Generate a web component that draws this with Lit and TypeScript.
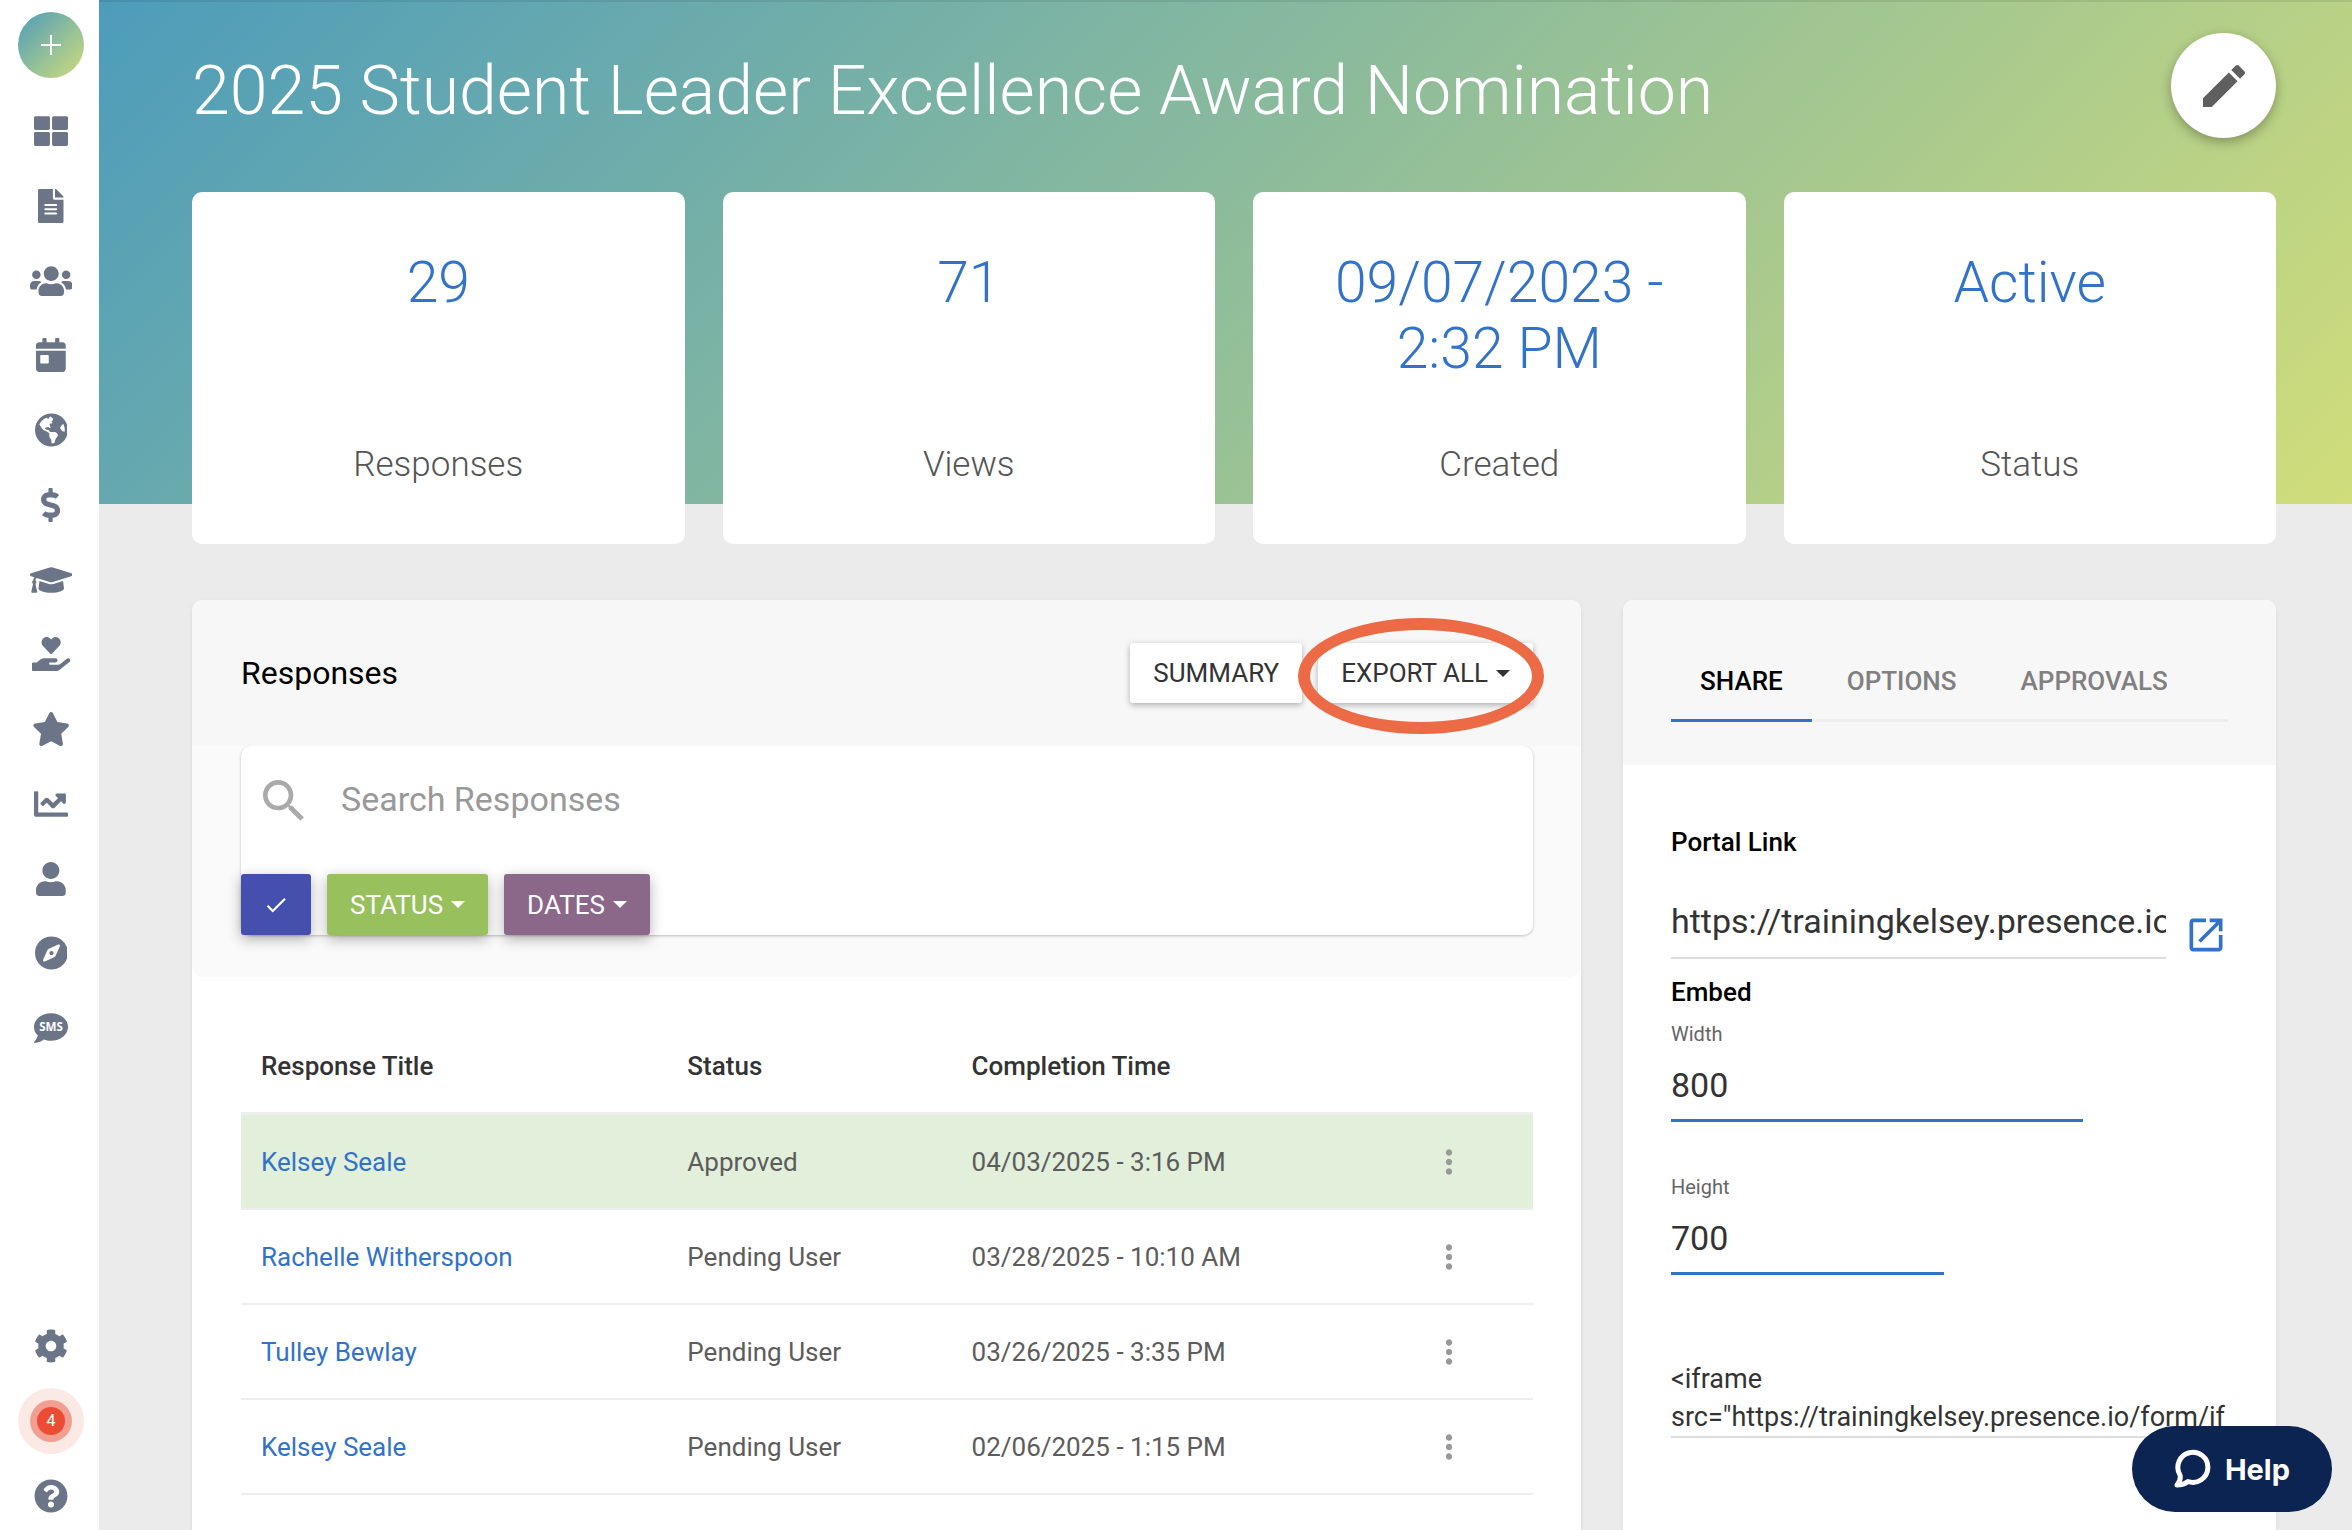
import { LitElement, html, css, svg } from "lit";
import { customElement, property, state } from "lit/decorators.js";
import { classMap } from "lit/directives/class-map.js";

interface Glyph {
  name: string;
  width: number;
  path: string;
}

const NAV: Glyph[] = [
  { name: "Dashboard", width: 512, path: "M296 32h192c13.255 0 24 10.745 24 24v160c0 13.255-10.745 24-24 24H296c-13.255 0-24-10.745-24-24V56c0-13.255 10.745-24 24-24zm-80 0H24C10.745 32 0 42.745 0 56v160c0 13.255 10.745 24 24 24h192c13.255 0 24-10.745 24-24V56c0-13.255-10.745-24-24-24zM0 296v160c0 13.255 10.745 24 24 24h192c13.255 0 24-10.745 24-24V296c0-13.255-10.745-24-24-24H24c-13.255 0-24 10.745-24 24zm296 184h192c13.255 0 24-10.745 24-24V296c0-13.255-10.745-24-24-24H296c-13.255 0-24 10.745-24 24v160c0 13.255 10.745 24 24 24z" },
  { name: "Forms", width: 384, path: "M224 136V0H24C10.7 0 0 10.7 0 24v464c0 13.3 10.7 24 24 24h336c13.3 0 24-10.7 24-24V160H248c-13.2 0-24-10.8-24-24zm64 236c0 6.6-5.4 12-12 12H108c-6.6 0-12-5.4-12-12v-8c0-6.6 5.4-12 12-12h168c6.6 0 12 5.4 12 12v8zm0-64c0 6.6-5.4 12-12 12H108c-6.6 0-12-5.4-12-12v-8c0-6.6 5.4-12 12-12h168c6.6 0 12 5.4 12 12v8zm0-72v8c0 6.6-5.4 12-12 12H108c-6.6 0-12-5.4-12-12v-8c0-6.6 5.4-12 12-12h168c6.6 0 12 5.4 12 12zm96-114.1v6.1H256V0h6.1c6.4 0 12.5 2.5 17 7l97.9 98c4.5 4.5 7 10.6 7 16.9z" },
  { name: "Organizations", width: 640, path: "M96 224c35.3 0 64-28.7 64-64s-28.7-64-64-64-64 28.7-64 64 28.7 64 64 64zm448 0c35.3 0 64-28.7 64-64s-28.7-64-64-64-64 28.7-64 64 28.7 64 64 64zm32 32h-64c-17.6 0-33.5 7.1-45.1 18.6 40.3 22.1 68.9 62 75.1 109.4h66c17.7 0 32-14.3 32-32v-32c0-35.3-28.7-64-64-64zm-256 0c61.9 0 112-50.1 112-112S381.9 32 320 32 208 82.1 208 144s50.1 112 112 112zm76.8 32h-8.3c-20.8 10-43.9 16-68.5 16s-47.6-6-68.5-16h-8.3C179.6 288 128 339.6 128 403.2V432c0 26.5 21.5 48 48 48h288c26.5 0 48-21.5 48-48v-28.8c0-63.6-51.6-115.2-115.2-115.2zm-223.7-13.4C161.5 263.1 145.6 256 128 256H64c-35.3 0-64 28.7-64 64v32c0 17.7 14.3 32 32 32h65.9c6.3-47.4 34.9-87.3 75.2-109.4z" },
  { name: "Events", width: 448, path: "M0 464c0 26.5 21.5 48 48 48h352c26.5 0 48-21.5 48-48V192H0v272zm64-192c0-8.8 7.2-16 16-16h96c8.8 0 16 7.2 16 16v96c0 8.8-7.2 16-16 16H80c-8.8 0-16-7.2-16-16v-96zM400 64h-48V16c0-8.8-7.2-16-16-16h-32c-8.8 0-16 7.2-16 16v48H160V16c0-8.8-7.2-16-16-16h-32c-8.8 0-16 7.2-16 16v48H48C21.5 64 0 85.5 0 112v48h448v-48c0-26.5-21.5-48-48-48z" },
  { name: "Portal", width: 496, path: "M248 8C111.03 8 0 119.03 0 256s111.03 248 248 248 248-111.03 248-248S384.97 8 248 8zm82.29 357.6c-3.9 3.88-7.99 7.95-11.31 11.28-2.99 3-5.1 6.7-6.17 10.71-1.51 5.66-2.73 11.38-4.77 16.87l-17.39 46.85c-13.76 3-28 4.69-42.65 4.69v-27.38c1.69-12.62-7.64-36.26-22.63-51.25-6-6-9.37-14.14-9.37-22.63v-32.01c0-11.64-6.27-22.34-16.46-27.97-14.37-7.95-34.81-19.06-48.81-26.11-11.48-5.78-22.1-13.14-31.65-21.75l-.8-.72a114.792 114.792 0 0 1-18.06-20.74c-9.38-13.77-24.66-36.42-34.59-51.14 20.47-45.5 57.36-82.04 103.2-101.89l24.01 12.01C203.48 89.74 216 82.01 216 70.11v-11.3c7.99-1.29 16.12-2.11 24.39-2.42l28.3 28.3c6.25 6.25 6.25 16.38 0 22.63L264 112l-10.34 10.34c-3.12 3.12-3.12 8.19 0 11.31l4.69 4.69c3.12 3.12 3.12 8.19 0 11.31l-8 8a8.008 8.008 0 0 1-5.66 2.34h-8.99c-2.08 0-4.08.81-5.58 2.27l-9.92 9.65a8.008 8.008 0 0 0-1.58 9.31l15.59 31.19c2.66 5.32-1.21 11.58-7.15 11.58h-5.64c-1.93 0-3.79-.7-5.24-1.96l-9.28-8.06a16.017 16.017 0 0 0-15.55-3.1l-31.17 10.39a11.95 11.95 0 0 0-8.17 11.34c0 4.53 2.56 8.66 6.61 10.69l11.08 5.54c9.41 4.71 19.79 7.16 30.31 7.16s22.59 27.29 32 32h66.75c8.49 0 16.62 3.37 22.63 9.37l13.69 13.69a30.503 30.503 0 0 1 8.93 21.57 46.536 46.536 0 0 1-13.72 32.98zM417 274.25c-5.79-1.45-10.84-5-14.15-9.97l-17.98-26.97a23.97 23.97 0 0 1 0-26.62l19.59-29.38c2.32-3.47 5.5-6.29 9.24-8.15l12.98-6.49C440.2 193.59 448 223.87 448 256c0 8.67-.74 17.16-1.82 25.54L417 274.25z" },
  { name: "Finance", width: 288, path: "M209.2 233.4l-108-31.6C88.7 198.2 80 186.5 80 173.5c0-16.3 13.2-29.5 29.5-29.5h66.3c12.2 0 24.2 3.7 34.2 10.5 6.1 4.1 14.3 3.1 19.5-2l34.8-34c7.1-6.9 6.1-18.4-1.8-24.5C238 74.8 207.4 64.1 176 64V16c0-8.8-7.2-16-16-16h-32c-8.8 0-16 7.2-16 16v48h-2.5C45.8 64-5.4 118.7.5 183.6c4.2 46.1 39.4 83.6 83.8 96.6l102.5 30c12.5 3.7 21.2 15.3 21.2 28.3 0 16.3-13.2 29.5-29.5 29.5h-66.3C100 368 88 364.3 78 357.5c-6.1-4.1-14.3-3.1-19.5 2l-34.8 34c-7.1 6.9-6.1 18.4 1.8 24.5 24.5 19.2 55.1 29.9 86.5 30v48c0 8.8 7.2 16 16 16h32c8.8 0 16-7.2 16-16v-48.2c46.6-.9 90.3-28.6 105.7-72.7 21.5-61.6-14.6-124.8-72.5-141.7z" },
  { name: "Academics", width: 640, path: "M622.34 153.2L343.4 67.5c-15.2-4.67-31.6-4.67-46.79 0L17.66 153.2c-23.54 7.23-23.54 38.36 0 45.59l48.63 14.94c-10.67 13.19-17.23 29.28-17.88 46.9C38.78 266.15 32 276.11 32 288c0 10.78 5.68 19.85 13.86 25.65L20.33 428.53C18.11 438.52 25.71 448 35.94 448h56.11c10.24 0 17.84-9.48 15.62-19.47L82.14 313.65C90.32 307.85 96 298.78 96 288c0-11.57-6.47-21.25-15.66-26.87.76-15.02 8.44-28.3 20.69-36.72L296.6 284.5c9.06 2.78 26.44 6.25 46.79 0l278.95-85.7c23.55-7.24 23.55-38.36 0-45.6zM352.79 315.09c-28.53 8.76-52.84 3.92-65.59 0l-145.02-44.55L128 384c0 35.35 85.96 64 192 64s192-28.65 192-64l-14.18-113.47-145.03 44.56z" },
  { name: "Service", width: 576, path: "M275.3 250.5c7 7.4 18.4 7.4 25.5 0l108.9-114.2c31.6-33.2 29.8-88.2-5.6-118.8-30.8-26.7-76.7-21.9-104.9 7.7L288 36.9l-11.1-11.6C248.7-4.4 202.8-9.2 172 17.5c-35.3 30.6-37.2 85.6-5.6 118.8l108.9 114.2zm290 77.6c-11.8-10.7-30.2-10-42.6 0L430.3 402c-11.3 9.1-25.4 14-40 14H272c-8.8 0-16-7.2-16-16s7.2-16 16-16h78.3c15.9 0 30.7-10.9 33.3-26.6 3.3-20-12.1-37.4-31.6-37.4H192c-27 0-53.1 9.3-74.1 26.3L71.4 384H16c-8.8 0-16 7.2-16 16v96c0 8.8 7.2 16 16 16h356.8c14.5 0 28.6-4.9 40-14L564 377c15.2-12.1 16.4-35.3 1.3-48.9z" },
  { name: "Favorites", width: 576, path: "M259.3 17.8L194 150.2 47.9 171.5c-26.2 3.8-36.7 36.1-17.7 54.6l105.7 103-25 145.5c-4.5 26.3 23.2 46 46.4 33.7L288 439.6l130.7 68.7c23.2 12.2 50.9-7.4 46.4-33.7l-25-145.5 105.7-103c19-18.5 8.5-50.8-17.7-54.6L382 150.2 316.7 17.8c-11.7-23.6-45.6-23.9-57.4 0z" },
  { name: "Analytics", width: 512, path: "M496 384H64V80c0-8.84-7.16-16-16-16H16C7.16 64 0 71.16 0 80v336c0 17.67 14.33 32 32 32h464c8.84 0 16-7.16 16-16v-32c0-8.84-7.16-16-16-16zM464 96H345.94c-21.38 0-32.09 25.85-16.97 40.97l32.4 32.4L288 242.75l-73.37-73.37c-12.5-12.5-32.76-12.5-45.25 0l-68.69 68.69c-6.25 6.25-6.25 16.38 0 22.63l22.62 22.62c6.25 6.25 16.38 6.25 22.63 0L192 237.25l73.37 73.37c12.5 12.5 32.76 12.5 45.25 0l96-96 32.4 32.4c15.12 15.12 40.97 4.41 40.97-16.97V112c.01-8.84-7.15-16-15.99-16z" },
  { name: "People", width: 448, path: "M224 256c70.7 0 128-57.3 128-128S294.7 0 224 0 96 57.3 96 128s57.3 128 128 128zm89.6 32h-16.7c-22.2 10.2-46.9 16-72.9 16s-50.6-5.8-72.9-16h-16.7C60.2 288 0 348.2 0 422.4V464c0 26.5 21.5 48 48 48h352c26.5 0 48-21.5 48-48v-41.6c0-74.2-60.2-134.4-134.4-134.4z" },
  { name: "Explore", width: 496, path: "M225.38 233.37c-12.5 12.5-12.5 32.76 0 45.25 12.49 12.5 32.76 12.5 45.25 0 12.5-12.5 12.5-32.76 0-45.25-12.5-12.49-32.76-12.49-45.25 0zM248 8C111.03 8 0 119.03 0 256s111.03 248 248 248 248-111.03 248-248S384.97 8 248 8zm126.14 148.05L308.17 300.4a31.938 31.938 0 0 1-15.77 15.77l-144.34 65.97c-16.65 7.61-33.81-9.55-26.2-26.2l65.98-144.35a31.938 31.938 0 0 1 15.77-15.77l144.34-65.97c16.65-7.6 33.8 9.55 26.19 26.2z" },
];

const SMS_BUBBLE =
  "M256 32C114.6 32 0 125.1 0 240c0 49.6 21.4 95 57 130.7C44.5 421.1 2.7 466 2.2 466.5c-2.2 2.3-2.8 5.7-1.5 8.7S4.8 480 8 480c66.3 0 116-31.8 140.6-51.4 32.7 12.3 69 19.4 107.4 19.4 141.4 0 256-93.1 256-208S397.4 32 256 32z";

const SETTINGS: Glyph = {
  name: "Settings",
  width: 512,
  path: "M487.4 315.7l-42.6-24.6c4.3-23.2 4.3-47 0-70.2l42.6-24.6c4.9-2.8 7.1-8.6 5.5-14-11.1-35.6-30-67.8-54.7-94.6-3.8-4.1-10-5.1-14.8-2.3L380.8 110c-17.9-15.4-38.5-27.3-60.8-35.1V25.8c0-5.6-3.9-10.5-9.4-11.7-36.7-8.2-74.3-7.8-109.2 0-5.5 1.2-9.4 6.1-9.4 11.7V75c-22.2 7.9-42.8 19.8-60.8 35.1L88.7 85.5c-4.9-2.8-11-1.9-14.8 2.3-24.7 26.7-43.6 58.9-54.7 94.6-1.7 5.4.6 11.2 5.5 14L67.3 221c-4.3 23.2-4.3 47 0 70.2l-42.6 24.6c-4.9 2.8-7.1 8.6-5.5 14 11.1 35.6 30 67.8 54.7 94.6 3.8 4.1 10 5.1 14.8 2.3l42.6-24.6c17.9 15.4 38.5 27.3 60.8 35.1v49.2c0 5.6 3.9 10.5 9.4 11.7 36.7 8.2 74.3 7.8 109.2 0 5.5-1.2 9.4-6.1 9.4-11.7v-49.2c22.2-7.9 42.8-19.8 60.8-35.1l42.6 24.6c4.9 2.8 11 1.9 14.8-2.3 24.7-26.7 43.6-58.9 54.7-94.6 1.5-5.5-.7-11.3-5.6-14.1zM256 336c-44.1 0-80-35.9-80-80s35.9-80 80-80 80 35.9 80 80-35.9 80-80 80z",
};

const SUPPORT: Glyph = {
  name: "Support",
  width: 512,
  path: "M504 256c0 136.997-111.043 248-248 248S8 392.997 8 256C8 119.083 119.043 8 256 8s248 111.083 248 248zM262.655 90c-54.497 0-89.255 22.957-116.549 63.758-3.536 5.286-2.353 12.415 2.715 16.258l34.699 26.31c5.205 3.947 12.621 3.008 16.665-2.122 17.864-22.658 30.113-35.797 57.303-35.797 20.429 0 45.698 13.148 45.698 32.958 0 14.976-12.363 22.667-32.534 33.976C247.128 238.528 216 254.941 216 296v4c0 6.627 5.373 12 12 12h56c6.627 0 12-5.373 12-12v-1.333c0-28.462 83.186-29.647 83.186-106.667 0-58.002-60.165-102-116.531-102zM256 338c-25.365 0-46 20.635-46 46 0 25.364 20.635 46 46 46s46-20.636 46-46c0-25.364-20.635-46-46-46z",
};

const EDIT = "M3 17.25V21h3.75L17.81 9.94l-3.75-3.75L3 17.25zM20.71 7.04c.39-.39.39-1.02 0-1.41l-2.34-2.34c-.39-.39-1.02-.39-1.41 0l-1.83 1.83 3.75 3.75 1.83-1.83z";
const SEARCH = "M15.5 14h-.79l-.28-.27C15.41 12.59 16 11.11 16 9.5 16 5.91 13.09 3 9.5 3S3 5.91 3 9.5 5.91 16 9.5 16c1.61 0 3.09-.59 4.23-1.57l.27.28v.79l5 4.99L20.49 19l-4.99-5zm-6 0C7.01 14 5 11.99 5 9.5S7.01 5 9.5 5 14 7.01 14 9.5 11.99 14 9.5 14z";
const CHECK = "M9 16.17L4.83 12l-1.42 1.41L9 19 21 7l-1.41-1.41z";
const OPEN = "M19 19H5V5h7V3H5c-1.11 0-2 .9-2 2v14c0 1.1.89 2 2 2h14c1.1 0 2-.9 2-2v-7h-2v7zM14 3v2h3.59l-9.83 9.83 1.41 1.41L19 6.41V10h2V3h-7z";
const MORE = "M12 8c1.1 0 2-.9 2-2s-.9-2-2-2-2 .9-2 2 .9 2 2 2zm0 2c-1.1 0-2 .9-2 2s.9 2 2 2 2-.9 2-2-.9-2-2-2zm0 6c-1.1 0-2 .9-2 2s.9 2 2 2 2-.9 2-2-.9-2-2-2z";

const material = (path: string, cls: string) =>
  html`<svg class=${cls} viewBox="0 0 24 24" aria-hidden="true"><path d=${path}></path></svg>`;

const reset = css`
  *,
  *::before,
  *::after {
    box-sizing: border-box;
  }
  button,
  input,
  textarea {
    margin: 0;
    padding: 0;
    border: 0;
    border-radius: 0;
    background: none;
    color: inherit;
    font: inherit;
    outline: none;
  }
  button {
    cursor: pointer;
  }
  svg {
    display: block;
    fill: currentColor;
  }
`;

@customElement("side-nav")
export class SideNav extends LitElement {
  static styles = [
    reset,
    css`
      :host {
        box-sizing: border-box;
        position: sticky;
        top: 0;
        display: flex;
        flex-direction: column;
        align-items: center;
        flex: none;
        width: 99px;
        height: 100vh;
        padding: 12px 0 10px 3px;
        background: #fff;
        color: #6c7588;
      }
      .add {
        display: grid;
        place-items: center;
        width: 66px;
        height: 66px;
        border-radius: 50%;
        background: linear-gradient(135deg, #4d9cbb, #d0dd7a);
      }
      .plus {
        width: 22px;
        height: 22px;
        fill: none;
        stroke: #fff;
        stroke-width: 2;
      }
      .list {
        display: flex;
        flex-direction: column;
        justify-content: space-between;
        height: 945px;
        margin: 29px 0 auto;
        padding: 0;
        list-style: none;
      }
      .foot {
        display: flex;
        flex-direction: column;
        gap: 27px;
        margin: 0;
        padding: 0;
        list-style: none;
      }
      .item {
        display: flex;
        align-items: center;
        justify-content: center;
        width: 66px;
        height: 48px;
        color: inherit;
        text-decoration: none;
      }
      .glyph {
        height: 34px;
        width: auto;
      }
      .sms {
        font: 700 175px "Open Sans", sans-serif;
        fill: #fff;
        text-anchor: middle;
      }
      .halo {
        display: grid;
        place-items: center;
        flex: none;
        width: 66px;
        height: 66px;
        border-radius: 50%;
        background: #fbe9e6;
      }
      .ring {
        display: grid;
        place-items: center;
        width: 42px;
        height: 42px;
        border-radius: 50%;
        background: #f29f92;
      }
      .count {
        display: grid;
        place-items: center;
        width: 28px;
        height: 28px;
        border-radius: 50%;
        background: #ec4c33;
        color: #fff;
        font-size: 16px;
        line-height: 28px;
      }
    `,
  ];

  private link(g: Glyph) {
    return html`<li>
      <a class="item" href="#" aria-label=${g.name}>
        <svg class="glyph" viewBox="0 0 ${g.width} 512" aria-hidden="true"><path d=${g.path}></path></svg>
      </a>
    </li>`;
  }

  render() {
    return html`
      <button class="add" aria-label="Create">
        <svg class="plus" viewBox="0 0 22 22" aria-hidden="true"><path d="M11 1v20M1 11h20"></path></svg>
      </button>
      <ul class="list">
        ${NAV.map((g) => this.link(g))}
        <li>
          <a class="item" href="#" aria-label="Text messages">
            <svg class="glyph" viewBox="0 0 512 512" aria-hidden="true">
              <path d=${SMS_BUBBLE}></path>
              ${svg`<text class="sms" x="256" y="304">SMS</text>`}
            </svg>
          </a>
        </li>
      </ul>
      <ul class="foot">
        ${this.link(SETTINGS)}
        <li>
          <a class="item" href="#" aria-label="Notifications">
            <span class="halo"><span class="ring"><span class="count">4</span></span></span>
          </a>
        </li>
        ${this.link(SUPPORT)}
      </ul>
    `;
  }
}

@customElement("stat-card")
export class StatCard extends LitElement {
  @property() value = "";
  @property() label = "";

  static styles = css`
    :host {
      box-sizing: border-box;
      display: flex;
      flex-direction: column;
      justify-content: space-between;
      min-height: 352px;
      padding: 58px 48px 59px;
      border-radius: 10px;
      background: #fff;
      text-align: center;
      font-weight: 300;
    }
    .value {
      color: #3273c9;
      font-size: 57px;
      line-height: 66px;
    }
    .label {
      color: #555;
      font-size: 35px;
      line-height: 40px;
    }
  `;

  render() {
    return html`<div class="value">${this.value}</div>
      <div class="label">${this.label}</div>`;
  }
}

@customElement("responses-panel")
export class ResponsesPanel extends LitElement {
  @state() private rows = [
    { name: "Kelsey Seale", status: "Approved", time: "04/03/2025 - 3:16 PM" },
    { name: "Rachelle Witherspoon", status: "Pending User", time: "03/28/2025 - 10:10 AM" },
    { name: "Tulley Bewlay", status: "Pending User", time: "03/26/2025 - 3:35 PM" },
    { name: "Kelsey Seale", status: "Pending User", time: "02/06/2025 - 1:15 PM" },
  ];

  static styles = [
    reset,
    css`
      :host {
        display: block;
        border-radius: 10px 10px 0 0;
        background: #fff;
        box-shadow: 0 2px 4px rgba(0, 0, 0, 0.08);
      }
      .head {
        display: flex;
        align-items: center;
        gap: 16px;
        padding: 43px 48px 43px 49px;
        border-radius: 10px 10px 0 0;
        background: #f7f7f7;
      }
      .title {
        flex: 1;
        margin: 0;
        color: #000;
        font-size: 32px;
        font-weight: 400;
        line-height: 60px;
      }
      .btn {
        display: flex;
        align-items: center;
        justify-content: center;
        gap: 8px;
        height: 60px;
        padding: 0 23px;
        border-radius: 3px;
        font-size: 26px;
      }
      .raised {
        background: #fff;
        color: #333;
        box-shadow: 0 2px 6px rgba(0, 0, 0, 0.3);
      }
      .caret {
        border: 7px solid transparent;
        border-top-color: currentColor;
        border-bottom: 0;
      }
      .marked {
        position: relative;
      }
      .ellipse {
        position: absolute;
        inset: -25px -11px -31px -20px;
        border: 12px solid #ec6a46;
        border-radius: 50%;
        pointer-events: none;
      }
      .filters {
        padding: 0 48px 42px 49px;
        border-radius: 0 0 12px 12px;
        background: #fafafa;
      }
      .box {
        display: flex;
        flex-direction: column;
        gap: 18px;
        border-radius: 10px;
        background: #fff;
        box-shadow: 0 1px 3px rgba(0, 0, 0, 0.25);
        clip-path: inset(0 -40px -40px -40px);
      }
      .search {
        display: flex;
        align-items: center;
        gap: 29px;
        height: 110px;
        padding: 0 15px;
      }
      .lens {
        width: 56px;
        height: 56px;
        color: #aaa;
      }
      .query {
        flex: 1;
        height: 60px;
        padding-bottom: 4px;
        font-size: 34px;
        color: #333;
      }
      .query::placeholder {
        color: #999;
        opacity: 1;
      }
      .chips {
        display: flex;
        gap: 16px;
      }
      .chip {
        height: 61px;
        color: #fff;
        box-shadow: 0 4px 14px rgba(0, 0, 0, 0.3);
      }
      .blue {
        padding: 0 22px;
        background: #454fae;
      }
      .green {
        background: #98c05c;
      }
      .plum {
        background: #8b678a;
      }
      .tick {
        width: 26px;
        height: 26px;
      }
      .body {
        padding: 43px 48px 30px 49px;
      }
      .table {
        width: 100%;
        border-collapse: separate;
        border-spacing: 0;
        table-layout: fixed;
        font-size: 26px;
        color: #5c5c5c;
      }
      .c-title {
        width: 33%;
      }
      .c-status {
        width: 22%;
      }
      .c-time {
        width: 35%;
      }
      th,
      td {
        height: 95px;
        padding: 0 20px;
        border-bottom: 2px solid #eee;
        text-align: left;
      }
      th {
        border-bottom: 3px solid #eee;
        color: #333;
        font-weight: 500;
      }
      .approved td {
        background: #e2efdb;
      }
      .name {
        color: #3273c9;
        text-decoration: none;
      }
      .more {
        display: block;
        padding-left: 6px;
        color: #999;
      }
      .dots {
        width: 38px;
        height: 38px;
      }
    `,
  ];

  render() {
    return html`
      <header class="head">
        <h2 class="title">Responses</h2>
        <button class="btn raised">SUMMARY</button>
        <div class="marked">
          <button class="btn raised">EXPORT ALL<span class="caret"></span></button>
          <span class="ellipse"></span>
        </div>
      </header>
      <div class="filters">
        <div class="box">
          <label class="search">
            ${material(SEARCH, "lens")}
            <input class="query" type="text" placeholder="Search Responses" aria-label="Search Responses" />
          </label>
          <div class="chips">
            <button class="btn chip blue" aria-label="Select">${material(CHECK, "tick")}</button>
            <button class="btn chip green">STATUS<span class="caret"></span></button>
            <button class="btn chip plum">DATES<span class="caret"></span></button>
          </div>
        </div>
      </div>
      <div class="body">
        <table class="table">
          <colgroup>
            <col class="c-title" />
            <col class="c-status" />
            <col class="c-time" />
            <col />
          </colgroup>
          <thead>
            <tr>
              <th scope="col">Response Title</th>
              <th scope="col">Status</th>
              <th scope="col">Completion Time</th>
              <th></th>
            </tr>
          </thead>
          <tbody>
            ${this.rows.map(
              (r) => html`<tr class=${classMap({ approved: r.status === "Approved" })}>
                <td><a class="name" href="#">${r.name}</a></td>
                <td>${r.status}</td>
                <td>${r.time}</td>
                <td><button class="more" aria-label="More actions">${material(MORE, "dots")}</button></td>
              </tr>`
            )}
          </tbody>
        </table>
      </div>
    `;
  }
}

@customElement("share-panel")
export class SharePanel extends LitElement {
  @state() private active = "SHARE";

  static styles = [
    reset,
    css`
      :host {
        display: block;
        border-radius: 10px 10px 0 0;
        background: #fff;
        box-shadow: 0 2px 4px rgba(0, 0, 0, 0.08);
      }
      .head {
        padding: 43px 48px;
        border-radius: 10px 10px 0 0;
        background: #f7f7f7;
      }
      .tabs {
        display: flex;
        gap: 6px;
        box-shadow: inset 0 -3px #eee;
      }
      .tab {
        padding: 24px 29px;
        border-bottom: 3px solid transparent;
        color: #808080;
        font-size: 26px;
        font-weight: 500;
        line-height: 28px;
      }
      .on {
        border-color: #3273c9;
        color: #000;
      }
      .body {
        display: flex;
        flex-direction: column;
        padding: 62px 48px 48px;
        color: #333;
      }
      .heading {
        margin: 0;
        color: #000;
        font-size: 26px;
        font-weight: 500;
        line-height: 30px;
      }
      .link-row {
        display: flex;
        align-items: center;
        gap: 18px;
        margin: 28px 0 18px;
      }
      .url {
        flex: 1;
        min-width: 0;
        height: 74px;
        border-bottom: 2px solid #ddd;
        font-size: 34px;
      }
      .open {
        width: 44px;
        padding-top: 25px;
        color: #3273c9;
      }
      .open-icon {
        width: 44px;
        height: 44px;
      }
      .caption {
        margin-top: 15px;
        color: #666;
        font-size: 20px;
        line-height: 24px;
      }
      .size {
        height: 72px;
        margin-top: 4px;
        border-bottom: 3px solid #3273c9;
        font-size: 34px;
      }
      .wide {
        width: 74%;
        margin-bottom: 38px;
      }
      .narrow {
        width: 49%;
      }
      .code {
        width: 100%;
        height: 78px;
        margin-top: 85px;
        border-bottom: 2px solid #ddd;
        font-size: 27px;
        line-height: 38px;
        resize: none;
        overflow: hidden;
      }
    `,
  ];

  render() {
    return html`
      <header class="head">
        <div class="tabs" role="tablist">
          ${["SHARE", "OPTIONS", "APPROVALS"].map(
            (t) => html`<button
              class=${classMap({ tab: true, on: t === this.active })}
              role="tab"
              aria-selected=${t === this.active}
              @click=${() => (this.active = t)}
            >${t}</button>`
          )}
        </div>
      </header>
      <div class="body">
        <label class="heading" for="url">Portal Link</label>
        <div class="link-row">
          <input class="url" id="url" type="text" readonly value="https://trainingkelsey.presence.io" />
          <a class="open" href="#" aria-label="Open portal link">${material(OPEN, "open-icon")}</a>
        </div>
        <h3 class="heading">Embed</h3>
        <label class="caption" for="w">Width</label>
        <input class="size wide" id="w" type="text" value="800" />
        <label class="caption" for="h">Height</label>
        <input class="size narrow" id="h" type="text" value="700" />
        <textarea
          class="code"
          rows="2"
          readonly
          aria-label="Embed code"
          .value=${'<iframe\nsrc="https://trainingkelsey.presence.io/form/if'}
        ></textarea>
      </div>
    `;
  }
}

@customElement("app-root")
export class AppRoot extends LitElement {
  static styles = [
    reset,
    css`
      :host {
        display: flex;
        min-height: 100vh;
        background: #ebebeb;
        font-family: Roboto, "Liberation Sans", sans-serif;
      }
      .main {
        display: flex;
        flex-direction: column;
        flex: 1;
        min-width: 0;
        padding: 33px 76px 0 93px;
        background: linear-gradient(135deg, #4d9cbb, #d0dd7a) top / 100% 504px no-repeat;
        box-shadow: inset 0 2px rgba(0, 0, 0, 0.08);
      }
      .top {
        display: flex;
        justify-content: space-between;
        height: 105px;
        margin-bottom: 54px;
      }
      .title {
        margin: 0;
        padding-top: 18px;
        color: #fff;
        font-size: 68px;
        font-weight: 300;
        line-height: 80px;
      }
      .edit {
        display: grid;
        place-items: center;
        flex: none;
        width: 105px;
        height: 105px;
        border-radius: 50%;
        background: #fff;
        color: #5f5f5f;
        box-shadow: 0 4px 12px rgba(0, 0, 0, 0.3);
      }
      .pencil {
        width: 56px;
        height: 56px;
      }
      .stats {
        display: grid;
        grid-template-columns: repeat(4, 1fr);
        gap: 38px;
        margin-bottom: 56px;
      }
      .panels {
        display: grid;
        grid-template-columns: 1389fr 653fr;
        gap: 42px;
        flex: 1;
      }
      .help {
        position: fixed;
        right: 20px;
        bottom: 18px;
        display: flex;
        align-items: center;
        gap: 14px;
        height: 86px;
        padding: 0 42px 0 41px;
        border-radius: 43px;
        background: #0b2452;
        color: #fff;
        font: 700 29px Inter, Roboto, sans-serif;
      }
      .bubble {
        width: 38px;
        height: 40px;
        fill: none;
        stroke: #fff;
        stroke-width: 5;
        stroke-linejoin: round;
      }
    `,
  ];

  render() {
    return html`
      <side-nav></side-nav>
      <main class="main">
        <div class="top">
          <h1 class="title">2025 Student Leader Excellence Award Nomination</h1>
          <button class="edit" aria-label="Edit form">${material(EDIT, "pencil")}</button>
        </div>
        <section class="stats">
          <stat-card value="29" label="Responses"></stat-card>
          <stat-card value="71" label="Views"></stat-card>
          <stat-card value="09/07/2023 - 2:32 PM" label="Created"></stat-card>
          <stat-card value="Active" label="Status"></stat-card>
        </section>
        <div class="panels">
          <responses-panel></responses-panel>
          <share-panel></share-panel>
        </div>
      </main>
      <button class="help">
        <svg class="bubble" viewBox="0 0 38 40" aria-hidden="true">
          <path d="M7 26A15 15 0 1 1 15 32.500C12 35 8 36 4 36C6.500 33 8 30 7 26Z"></path>
        </svg>
        Help
      </button>
    `;
  }
}
